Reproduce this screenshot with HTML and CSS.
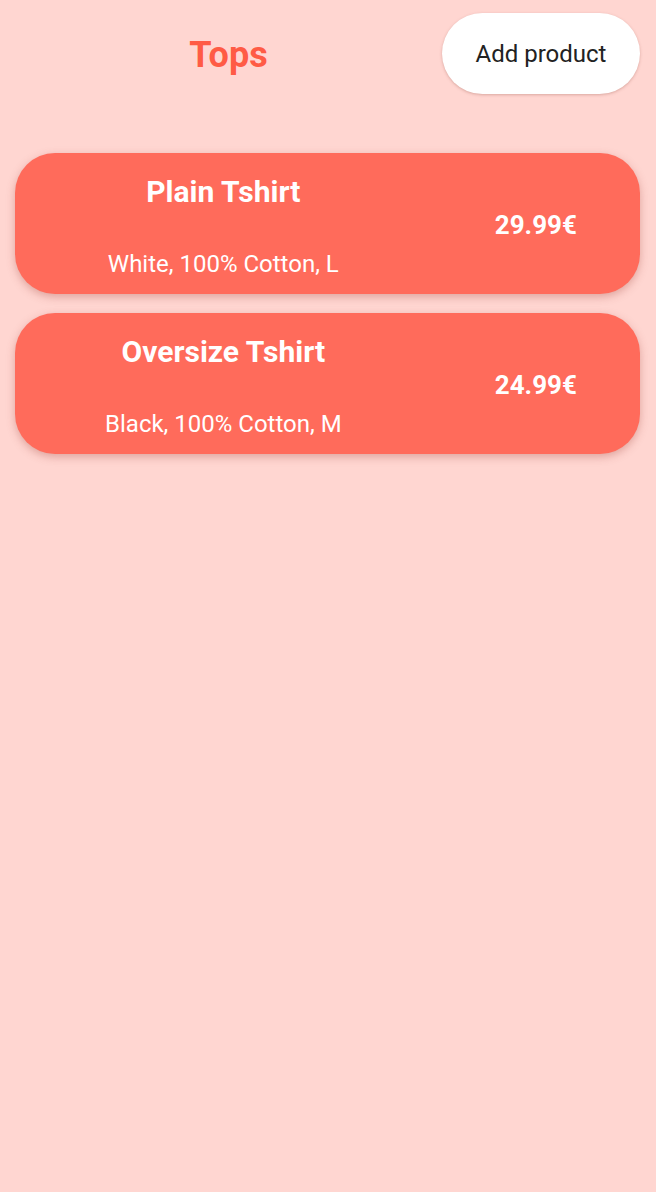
FILE: index.html
```html
<!DOCTYPE html>
<html>
<head>
<meta charset="utf-8">
<link rel="stylesheet" href="styles.css">
</head>
<body>
<div class="app">
  <header class="header">
    <h1 class="title">Tops</h1>
    <button class="add-btn">Add product</button>
  </header>
  <main class="list">
    <div class="card">
      <div class="info">
        <div class="name">Plain Tshirt</div>
        <div class="desc">White, 100% Cotton, L</div>
      </div>
      <div class="price">29.99€</div>
    </div>
    <div class="card">
      <div class="info">
        <div class="name">Oversize Tshirt</div>
        <div class="desc">Black, 100% Cotton, M</div>
      </div>
      <div class="price">24.99€</div>
    </div>
  </main>
</div>
</body>
</html>
```
FILE: styles.css
```css
html, body {
  margin: 0;
  padding: 0;
  background: #ffd6d1;
  font-family: Roboto, "Noto Sans", sans-serif;
}
.app {
  width: 656px;
  min-height: 1192px;
}
.header {
  display: flex;
  align-items: center;
  padding: 13px 16px 0 15px;
}
.title {
  flex: 1;
  margin: 0;
  text-align: center;
  color: #ff5b45;
  font-size: 36px;
  font-weight: 700;
  line-height: 42px;
  padding-top: 3px;
}
.add-btn {
  width: 198px;
  height: 81px;
  border: none;
  border-radius: 41px;
  background: #ffffff;
  color: #222222;
  font-family: Roboto, "Noto Sans", sans-serif;
  font-size: 24px;
  padding: 0;
  box-shadow: 0 1px 3px rgba(150, 80, 70, 0.35);
}
.list {
  display: flex;
  flex-direction: column;
  gap: 19px;
  padding: 59px 16px 0 15px;
}
.card {
  display: grid;
  grid-template-columns: 2fr 1fr;
  align-items: center;
  height: 141px;
  border-radius: 40px;
  background: #ff6b5b;
  box-shadow: 0 3px 8px rgba(160, 70, 60, 0.35);
  color: #ffffff;
}
.info {
  display: flex;
  flex-direction: column;
  align-items: center;
  justify-content: space-between;
  height: 100%;
  box-sizing: border-box;
  padding: 21px 0 16px;
}
.name {
  font-size: 30px;
  font-weight: 700;
  line-height: 36px;
}
.desc {
  font-size: 24px;
  line-height: 28px;
}
.price {
  text-align: center;
  font-size: 26px;
  font-weight: 700;
  padding-top: 2px;
}
```
